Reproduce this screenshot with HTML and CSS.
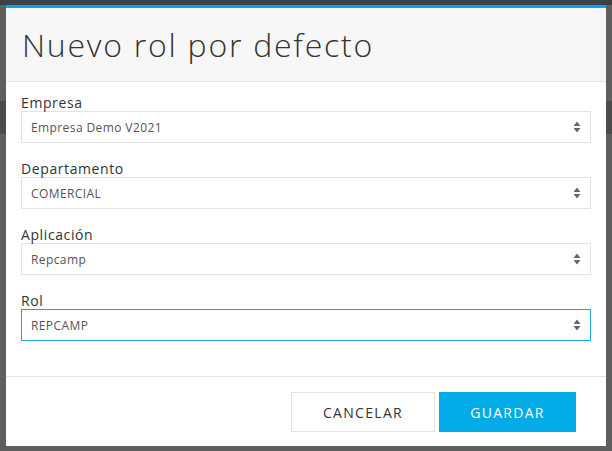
FILE: index.html
```html
<!DOCTYPE html>
<html lang="es">
<head>
    <meta charset="UTF-8">
    <meta name="viewport" content="width=device-width, initial-scale=1.0">
    <title>Nuevo rol por defecto</title>
    <link rel="stylesheet" href="styles.css">
</head>
<body>
    <div class="page-top"></div>
    <div class="page-band"></div>
    <div class="modal">
        <div class="modal-header">
            <h1>Nuevo rol por defecto</h1>
        </div>
        <form class="modal-body">
            <div class="form-group">
                <label>Empresa</label>
                <div class="select">
                    <span>Empresa Demo V2021</span>
                    <svg width="8" height="12" viewBox="0 0 8 12"><path d="M4 0.5L7.5 5H0.5Z M4 11.5L7.5 7H0.5Z" fill="#666"/></svg>
                </div>
            </div>
            <div class="form-group">
                <label>Departamento</label>
                <div class="select">
                    <span>COMERCIAL</span>
                    <svg width="8" height="12" viewBox="0 0 8 12"><path d="M4 0.5L7.5 5H0.5Z M4 11.5L7.5 7H0.5Z" fill="#666"/></svg>
                </div>
            </div>
            <div class="form-group">
                <label>Aplicación</label>
                <div class="select">
                    <span>Repcamp</span>
                    <svg width="8" height="12" viewBox="0 0 8 12"><path d="M4 0.5L7.5 5H0.5Z M4 11.5L7.5 7H0.5Z" fill="#666"/></svg>
                </div>
            </div>
            <div class="form-group">
                <label>Rol</label>
                <div class="select focused">
                    <span>REPCAMP</span>
                    <svg width="8" height="12" viewBox="0 0 8 12"><path d="M4 0.5L7.5 5H0.5Z M4 11.5L7.5 7H0.5Z" fill="#666"/></svg>
                </div>
            </div>
        </form>
        <div class="modal-footer">
            <button type="button" class="btn-cancel">CANCELAR</button>
            <button type="submit" class="btn-save">GUARDAR</button>
        </div>
    </div>
</body>
</html>
```

FILE: styles.css
```css
body {
    font-family: "Open Sans", Lato, sans-serif;
    margin: 0;
    padding: 0;
    background-color: #5f5f5f;
    position: relative;
    height: 451px;
    overflow: hidden;
}
.page-top {
    height: 5px;
    background-color: #3b4145;
}
.page-band {
    position: absolute;
    top: 101px;
    left: 0;
    right: 0;
    height: 33px;
    background-color: #4b4b4b;
}
.modal {
    position: relative;
    width: 600px;
    margin: 0 6px;
    background-color: #fff;
    border-top: 3px solid #00a8e4;
}
.modal-header {
    height: 73px;
    background-color: #f7f7f7;
    border-bottom: 1px solid #e5e5e5;
    display: flex;
    align-items: center;
    padding-left: 16px;
}
h1 {
    margin: 0;
    font-weight: 300;
    font-size: 32px;
    letter-spacing: 1.75px;
    color: #333;
}
.modal-body {
    padding: 13px 15px 17px;
}
.form-group {
    margin-bottom: 18px;
}
label {
    display: block;
    font-size: 14px;
    line-height: 16px;
    letter-spacing: 0.6px;
    color: #333;
}
.select {
    height: 32px;
    box-sizing: border-box;
    border: 1px solid #e3e3e3;
    display: flex;
    align-items: center;
    justify-content: space-between;
    padding: 0 9px 0 9px;
    font-size: 12px;
    letter-spacing: 0.4px;
    color: #555;
}
.select.focused {
    border-color: #1aa7dc;
}
.modal-footer {
    border-top: 1px solid #e5e5e5;
    display: flex;
    justify-content: flex-end;
    gap: 4px;
    padding: 15px 30px 14px;
}
button {
    font-family: inherit;
    font-size: 14px;
    letter-spacing: 1.3px;
    height: 40px;
    cursor: pointer;
}
.btn-cancel {
    width: 144px;
    background-color: #fff;
    border: 1px solid #e2e2e2;
    color: #333;
}
.btn-save {
    width: 137px;
    background-color: #00abe8;
    border: none;
    color: #fff;
}
```
